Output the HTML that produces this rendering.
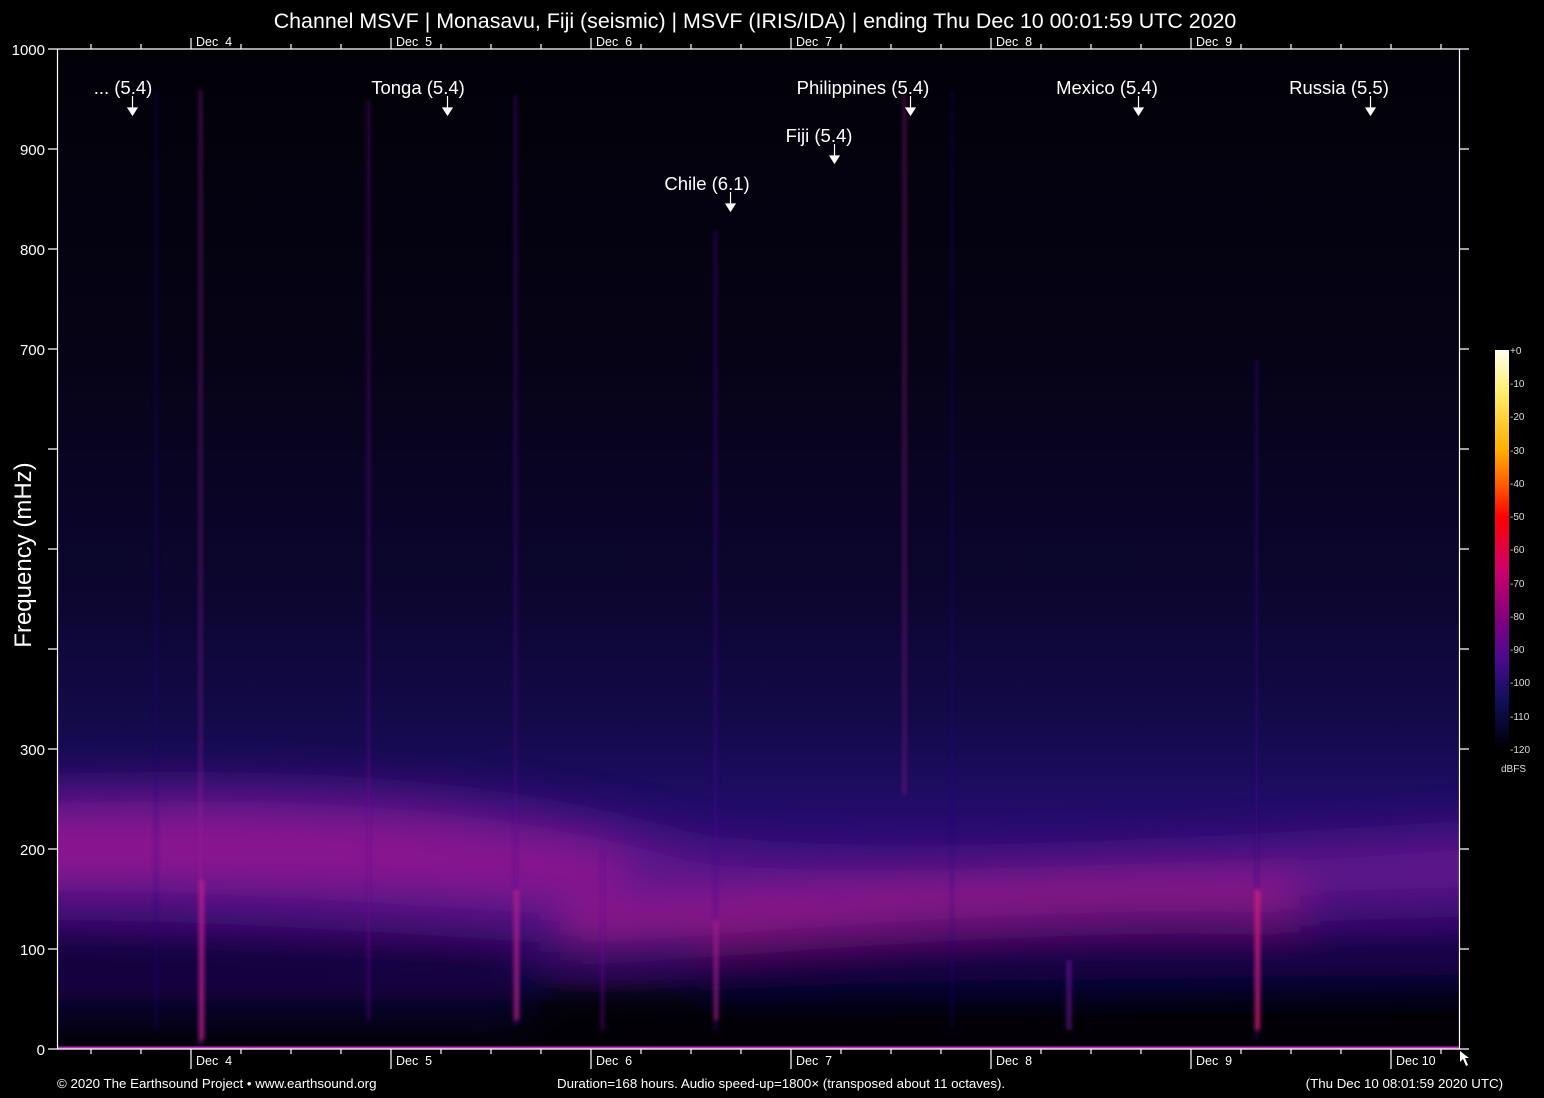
<!DOCTYPE html>
<html><head><meta charset="utf-8"><style>
html,body{margin:0;padding:0;background:#000;}
body{width:1544px;height:1098px;overflow:hidden;font-family:"Liberation Sans",sans-serif;}
</style></head><body>
<svg width="1544" height="1098" viewBox="0 0 1544 1098" xmlns="http://www.w3.org/2000/svg" font-family="Liberation Sans, sans-serif" style="display:block">
<defs>
<linearGradient id="bg" x1="0" y1="0" x2="0" y2="1">
<stop offset="0" stop-color="#020108"/>
<stop offset="0.3" stop-color="#060316"/>
<stop offset="0.55" stop-color="#0c0630"/>
<stop offset="0.68" stop-color="#140a4c"/>
<stop offset="0.75" stop-color="#200c66"/>
<stop offset="0.8" stop-color="#2c0c74"/>
<stop offset="0.88" stop-color="#2a0a6a"/>
<stop offset="0.93" stop-color="#1a0850"/>
<stop offset="0.96" stop-color="#0a0420"/>
<stop offset="1" stop-color="#030108"/>
</linearGradient>
<linearGradient id="cb" x1="0" y1="0" x2="0" y2="1">
<stop offset="0" stop-color="#fffff0"/>
<stop offset="0.1" stop-color="#fff070"/>
<stop offset="0.25" stop-color="#ffb000"/>
<stop offset="0.35" stop-color="#ff5000"/>
<stop offset="0.42" stop-color="#ff0000"/>
<stop offset="0.55" stop-color="#d0006a"/>
<stop offset="0.68" stop-color="#800080"/>
<stop offset="0.78" stop-color="#4a0a90"/>
<stop offset="0.88" stop-color="#10105a"/>
<stop offset="1" stop-color="#000008"/>
</linearGradient>
<filter id="b1" filterUnits="userSpaceOnUse" x="-100" y="0" width="1800" height="1200"><feGaussianBlur stdDeviation="22"/></filter>
<filter id="b2" filterUnits="userSpaceOnUse" x="0" y="0" width="1544" height="1098"><feGaussianBlur stdDeviation="2"/></filter>
<clipPath id="pc"><rect x="57" y="49" width="1402" height="1000"/></clipPath>
</defs>
<rect x="57" y="49" width="1402" height="1000" fill="url(#bg)"/>
<g clip-path="url(#pc)">
<g filter="url(#b1)">
<path d="M0,790 C300,780 500,790 700,850 C900,870 1100,860 1540,830 L1540,900 C1200,910 900,920 700,935 C500,930 300,905 0,905 Z" fill="#6a1490" opacity="0.85"/>
<path d="M0,820 C250,815 450,825 620,855 L620,895 C450,880 250,875 0,880 Z" fill="#a01a90" opacity="0.75"/>
<path d="M560,915 C800,900 1000,875 1300,885 L1300,915 C1000,905 800,935 560,945 Z" fill="#b01c8c" opacity="0.85"/>
<path d="M0,930 L520,940 L520,1000 L0,1000 Z" fill="#12063a" opacity="0.8"/>
<path d="M520,995 L1540,985 L1540,1045 L520,1045 Z" fill="#000000" opacity="0.9"/>
<path d="M700,945 C900,940 1100,935 1540,930 L1540,975 C1100,978 900,985 700,982 Z" fill="#140640" opacity="0.8"/>
</g>
<g filter="url(#b2)" opacity="0.85">
<rect x="199" y="90" width="3" height="955" fill="#9a1a9a" opacity="0.6"/>
<rect x="199" y="880" width="5" height="160" fill="#c02090"/>
<rect x="367" y="100" width="3" height="920" fill="#6a1490" opacity="0.6"/>
<rect x="514" y="95" width="3" height="930" fill="#5a1290" opacity="0.6"/>
<rect x="514" y="890" width="5" height="130" fill="#b02090"/>
<rect x="601" y="850" width="3" height="180" fill="#6a1490" opacity="0.7"/>
<rect x="714" y="230" width="3" height="800" fill="#4a1090" opacity="0.6"/>
<rect x="714" y="920" width="4" height="100" fill="#a01a90"/>
<rect x="903" y="95" width="3" height="700" fill="#a01a90" opacity="0.6"/>
<rect x="155" y="90" width="2" height="940" fill="#2a0c80" opacity="0.6"/>
<rect x="951" y="90" width="2" height="940" fill="#2a0c80" opacity="0.6"/>
<rect x="1255" y="360" width="3" height="680" fill="#3a0c80" opacity="0.6"/>
<rect x="1255" y="890" width="5" height="140" fill="#d02080"/>
<rect x="1067" y="960" width="4" height="70" fill="#6a1490"/>
</g>
</g>
<line x1="57" y1="1047.5" x2="1459" y2="1047.5" stroke="#c030c0" stroke-width="2"/>
<g stroke="#fff" stroke-width="1.2" fill="none">
<line x1="57" y1="49" x2="1469" y2="49"/>
<line x1="57" y1="1049" x2="1469" y2="1049"/>
<line x1="57.5" y1="49" x2="57.5" y2="1049"/>
<line x1="1459.5" y1="49" x2="1459.5" y2="1049"/>
<path d="M48,49H57M48,149H57M48,249H57M48,349H57M48,449H57M48,549H57M48,649H57M48,749H57M48,849H57M48,949H57M48,1049H57"/>
<path d="M1459,149H1469M1459,249H1469M1459,349H1469M1459,449H1469M1459,549H1469M1459,649H1469M1459,749H1469M1459,849H1469M1459,949H1469"/>
<path d="M91,49V44M141,49V44M241,49V44M291,49V44M341,49V44M441,49V44M491,49V44M541,49V44M641,49V44M691,49V44M741,49V44M841,49V44M891,49V44M941,49V44M1041,49V44M1091,49V44M1141,49V44M1241,49V44M1291,49V44M1341,49V44M1391,49V44M1441,49V44"/>
<path d="M191,49V38M391,49V38M591,49V38M791,49V38M991,49V38M1191,49V38"/>
<path d="M91,1049V1054M141,1049V1054M241,1049V1054M291,1049V1054M341,1049V1054M441,1049V1054M491,1049V1054M541,1049V1054M641,1049V1054M691,1049V1054M741,1049V1054M841,1049V1054M891,1049V1054M941,1049V1054M1041,1049V1054M1091,1049V1054M1141,1049V1054M1241,1049V1054M1291,1049V1054M1341,1049V1054M1441,1049V1054"/>
<path d="M191,1049V1069M391,1049V1069M591,1049V1069M791,1049V1069M991,1049V1069M1191,1049V1069M1391,1049V1069"/>
</g>
<g fill="#fff" font-size="15" text-anchor="end">
<text x="45" y="55">1000</text><text x="45" y="155">900</text><text x="45" y="255">800</text><text x="45" y="355">700</text>
<text x="45" y="755">300</text><text x="45" y="855">200</text><text x="45" y="955">100</text><text x="45" y="1055">0</text>
</g>
<text x="0" y="0" fill="#fff" font-size="24" text-anchor="middle" transform="translate(31,555) rotate(-90)">Frequency (mHz)</text>
<text x="755" y="28" fill="#fff" font-size="21.4" text-anchor="middle">Channel MSVF | Monasavu, Fiji (seismic) | MSVF (IRIS/IDA) | ending Thu Dec 10 00:01:59 UTC 2020</text>
<g fill="#fff" font-size="12.5">
<text x="196" y="46">Dec&#160;&#160;4</text><text x="396" y="46">Dec&#160;&#160;5</text><text x="596" y="46">Dec&#160;&#160;6</text><text x="796" y="46">Dec&#160;&#160;7</text><text x="996" y="46">Dec&#160;&#160;8</text><text x="1196" y="46">Dec&#160;&#160;9</text>
<text x="196" y="1065">Dec&#160;&#160;4</text><text x="396" y="1065">Dec&#160;&#160;5</text><text x="596" y="1065">Dec&#160;&#160;6</text><text x="796" y="1065">Dec&#160;&#160;7</text><text x="996" y="1065">Dec&#160;&#160;8</text><text x="1196" y="1065">Dec&#160;&#160;9</text><text x="1396" y="1065">Dec 10</text>
</g>
<g fill="#fff" font-size="13.3">
<text x="57" y="1088">© 2020 The Earthsound Project • www.earthsound.org</text>
<text x="557" y="1088">Duration=168 hours. Audio speed-up=1800× (transposed about 11 octaves).</text>
<text x="1503" y="1088" text-anchor="end">(Thu Dec 10 08:01:59 2020 UTC)</text>
</g>
<g fill="#fff" font-size="18.5" text-anchor="middle">
<text x="123" y="94">... (5.4)</text>
<text x="418" y="94">Tonga (5.4)</text>
<text x="863" y="94">Philippines (5.4)</text>
<text x="1107" y="94">Mexico (5.4)</text>
<text x="1339" y="94">Russia (5.5)</text>
<text x="819" y="142">Fiji (5.4)</text>
<text x="707" y="190">Chile (6.1)</text>
</g>
<g stroke="#fff" stroke-width="1.2" fill="#fff">
<line x1="132.5" y1="96" x2="132.5" y2="108"/><path d="M128,108h9l-4.5,7z"/>
<line x1="447.5" y1="96" x2="447.5" y2="108"/><path d="M443,108h9l-4.5,7z"/>
<line x1="910.5" y1="96" x2="910.5" y2="108"/><path d="M906,108h9l-4.5,7z"/>
<line x1="1138.5" y1="96" x2="1138.5" y2="108"/><path d="M1134,108h9l-4.5,7z"/>
<line x1="1370.5" y1="96" x2="1370.5" y2="108"/><path d="M1366,108h9l-4.5,7z"/>
<line x1="834.5" y1="144" x2="834.5" y2="156"/><path d="M830,156h9l-4.5,7z"/>
<line x1="730.5" y1="192" x2="730.5" y2="204"/><path d="M726,204h9l-4.5,7z"/>
</g>
<path d="M1460,1051 L1460,1062 L1463,1059 L1466,1066 L1468,1065 L1465,1058 L1469,1058 Z" fill="#fff"/>
<rect x="1495" y="350" width="14" height="397" fill="url(#cb)"/>
<g fill="#ddd" font-size="10">
<text x="1510" y="354">+0</text><text x="1510" y="387">-10</text><text x="1510" y="420">-20</text><text x="1510" y="454">-30</text>
<text x="1510" y="487">-40</text><text x="1510" y="520">-50</text><text x="1510" y="553">-60</text><text x="1510" y="587">-70</text>
<text x="1510" y="620">-80</text><text x="1510" y="653">-90</text><text x="1510" y="686">-100</text><text x="1510" y="720">-110</text>
<text x="1510" y="753">-120</text><text x="1501" y="772">dBFS</text>
</g>
</svg>
</body></html>
